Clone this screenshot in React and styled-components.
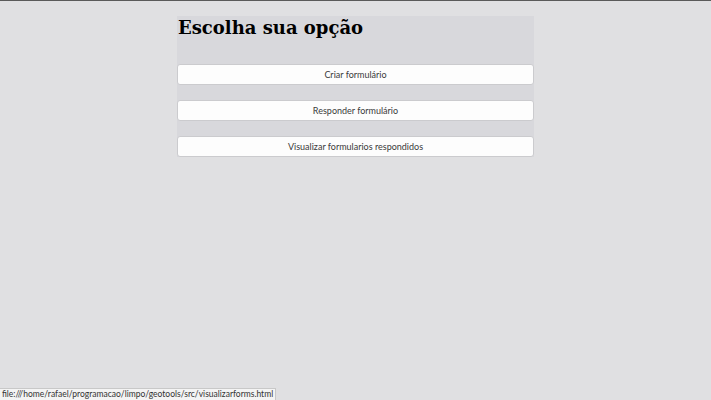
import React from 'react';
import styled, { createGlobalStyle } from 'styled-components';

const GlobalStyle = createGlobalStyle`
  html, body {
    margin: 0;
    padding: 0;
    height: 100%;
    background: #e0e0e2;
  }
  body {
    border-top: 1px solid #5a5a5a;
    box-sizing: border-box;
  }
`;

const Page = styled.div`
  display: flex;
  justify-content: center;
  padding-top: 15px;
`;

const Panel = styled.div`
  width: 357px;
  background: #d8d8dc;
  display: flex;
  flex-direction: column;
  gap: 15px;
`;

const Title = styled.h1`
  margin: 0;
  height: 33px;
  padding-left: 1px;
  font-family: 'DejaVu Serif', serif;
  font-weight: bold;
  font-size: 18px;
  line-height: 24px;
  color: #000;
`;

const OptionButton = styled.button`
  height: 21px;
  width: 100%;
  background: #fdfdfd;
  border: 1px solid #cbcbce;
  border-radius: 3px;
  font-family: Lato, sans-serif;
  font-size: 9px;
  color: #3a3a3a;
  cursor: pointer;
  padding: 0;
`;

const StatusBar = styled.div`
  position: fixed;
  left: 0;
  bottom: 0;
  height: 11px;
  padding: 0 2px;
  background: #f4f4f4;
  border: 1px solid #c8c8c8;
  border-left: none;
  border-bottom: none;
  font-family: Lato, sans-serif;
  font-size: 8.5px;
  line-height: 11px;
  color: #333;
`;

const options = [
  'Criar formulário',
  'Responder formulário',
  'Visualizar formularios respondidos',
];

const App = () => (
  <>
    <GlobalStyle />
    <Page>
      <Panel>
        <Title>Escolha sua opção</Title>
        {options.map((label) => (
          <OptionButton key={label}>{label}</OptionButton>
        ))}
      </Panel>
    </Page>
    <StatusBar>file:///home/rafael/programacao/limpo/geotools/src/visualizarforms.html</StatusBar>
  </>
);

export default App;
